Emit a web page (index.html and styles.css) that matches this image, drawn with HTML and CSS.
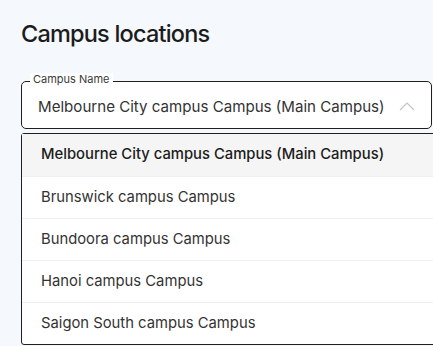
FILE: index.html
```html
<!DOCTYPE html>
<html lang="en">
    <head>
        <meta charset="UTF-8">
        <meta name="viewport" content="width=device-width, initial-scale=1.0">
        <title>Campus locations</title>
        <link rel="stylesheet" href="styles.css">
    </head>
    <body>
        <main class="page">
            <h1 class="page-title">Campus locations</h1>

            <div class="select-field">
                <span class="select-label">Campus Name</span>
                <span class="select-value">Melbourne City campus Campus (Main Campus)</span>
                <svg class="select-chevron" width="16" height="10" viewBox="0 0 16 10">
                    <path d="M1 9 L8 2 L15 9" fill="none" stroke="#c4c4c4" stroke-width="1.2"/>
                </svg>
            </div>

            <ul class="select-menu">
                <li class="menu-item selected">Melbourne City campus Campus (Main Campus)</li>
                <li class="menu-item">Brunswick campus Campus</li>
                <li class="menu-item">Bundoora campus Campus</li>
                <li class="menu-item">Hanoi campus Campus</li>
                <li class="menu-item">Saigon South campus Campus</li>
            </ul>
        </main>
    </body>
</html>
```

FILE: styles.css
```css
body {
    margin: 0;
    background-color: #f5f8fd;
    font-family: Inter, "Noto Sans", sans-serif;
    color: #2b2b2b;
    overflow: hidden;
}

.page {
    padding: 18px 0 0 21px;
    width: 420px;
}

.page-title {
    margin: 0;
    font-size: 23.5px;
    font-weight: 500;
    letter-spacing: -0.8px;
    line-height: 32px;
    color: #1c1c1c;
}

.select-field {
    position: relative;
    margin-top: 31px;
    width: 411px;
    height: 48px;
    border: 1px solid #1f1f1f;
    border-radius: 5px;
    background-color: #fff;
    display: flex;
    align-items: center;
    padding-left: 16px;
    box-sizing: border-box;
}

.select-label {
    position: absolute;
    top: -9px;
    left: 8px;
    padding: 0 3px;
    background-color: #fff;
    font-size: 11px;
    line-height: 13px;
    color: #3a3a3a;
}

.select-value {
    margin-top: 2px;
    font-size: 15.1px;
    color: #333;
}

.select-chevron {
    position: absolute;
    right: 16px;
    top: 19px;
}

.select-menu {
    list-style: none;
    margin: 4px 0 0 0;
    padding: 0;
    width: 420px;
    border: 1px solid #1f1f1f;
    border-radius: 3px;
    background-color: #fff;
}

.menu-item {
    height: 41px;
    line-height: 41px;
    padding-left: 19px;
    font-size: 14.8px;
    color: #333;
    border-top: 1px solid #f0f0f0;
}

.menu-item:first-child {
    border-top: none;
    height: 42px;
}

.menu-item.selected {
    background-color: #f5f5f5;
    font-weight: 500;
    color: #1c1c1c;
}
```
